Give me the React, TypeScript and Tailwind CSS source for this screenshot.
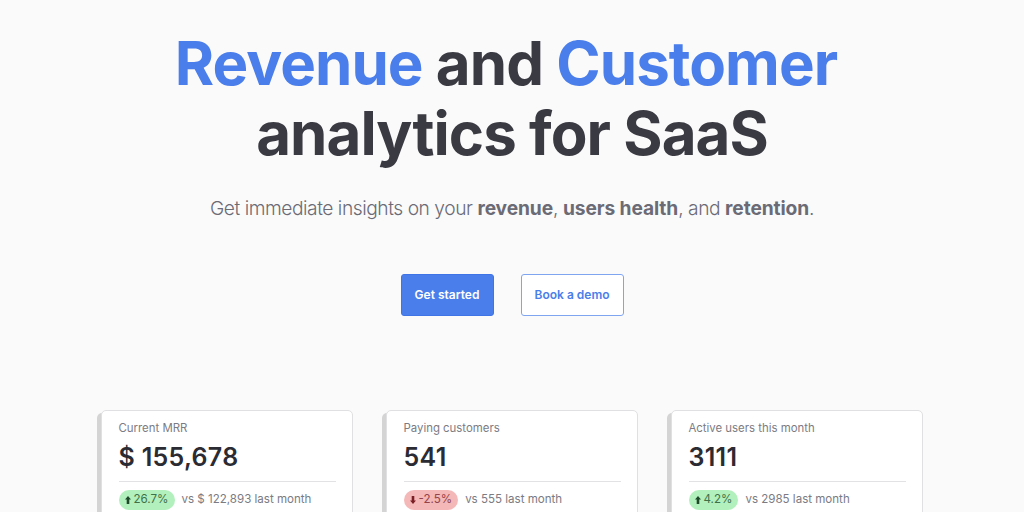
const metrics = [
  { title: "Current MRR", value: "$ 155,678", change: "26.7%", up: true, note: "vs $ 122,893 last month" },
  { title: "Paying customers", value: "541", change: "-2.5%", up: false, note: "vs 555 last month" },
  { title: "Active users this month", value: "3111", change: "4.2%", up: true, note: "vs 2985 last month" },
];

export default function App() {
  return (
    <div className="h-[512px] overflow-hidden bg-[#fafafb] font-['Inter',sans-serif]">
      <div className="flex flex-col items-center pt-[28px]">
        <h1 className="text-center text-[60px] leading-[70px] font-bold tracking-[-0.95px] text-[#3a3a42]">
          <span className="text-[#4a7eea]">Revenue</span> and <span className="mr-[12px] text-[#4a7eea]">Customer</span>
          <br />
          analytics for SaaS
        </h1>
        <p className="mt-[25px] text-[19.2px] leading-[30px] font-[350] tracking-[-0.45px] text-[#6b6b75]">
          Get immediate insights on your <b className="font-bold tracking-[-0.1px]">revenue</b>, <b className="font-bold tracking-[-0.1px]">users health</b>, and <b className="font-bold tracking-[-0.1px]">retention</b>.
        </p>
        <div className="mt-[51px] flex gap-[27px]">
          <button className="h-[42px] w-[93px] rounded-[3px] border border-[#3f74e6] bg-[#4a7eea] text-[12px] font-semibold text-white">
            Get started
          </button>
          <button className="h-[42px] w-[103px] rounded-[3px] border border-[#7fa5f0] bg-white text-[12px] font-semibold text-[#4a7eea]">
            Book a demo
          </button>
        </div>
      </div>
      <div className="mt-[94px] ml-[101px] flex gap-[33px]">
        {metrics.map((m) => (
          <div
            key={m.title}
            className="h-[140px] w-[252px] rounded-[5px] border border-[#e0e0e2] bg-white px-[16.5px] pt-[9px] shadow-[-4px_3px_0_0_#d4d4d4]"
          >
            <div className="text-[11.4px] leading-[16px] text-[#7b7b83]">{m.title}</div>
            <div className="mt-[5px] text-[25px] leading-[32px] font-semibold tracking-[0.3px] text-[#2b2b33]">{m.value}</div>
            <div className="mt-[8px] border-t border-[#e2e2e4] pt-[8px]">
              <div className="flex items-center gap-[7px]">
                <span
                  className={
                    m.up
                      ? "flex h-[20px] items-center gap-[3px] rounded-full bg-[#b2f0bd] pr-[6px] pl-[6px] text-[11.6px] text-[#3f7049]"
                      : "flex h-[20px] items-center gap-[3px] rounded-full bg-[#f5b8b8] pr-[6px] pl-[6px] text-[11.6px] text-[#94434a]"
                  }
                >
                  <svg viewBox="0 0 6 8" className={m.up ? "h-[8px] w-[6px] fill-[#1f4a2a]" : "h-[8px] w-[6px] rotate-180 fill-[#7a1f24]"}>
                    <path d="M3 0 L6 3.6 H4.3 V8 H1.7 V3.6 H0 Z" />
                  </svg>
                  {m.change}
                </span>
                <span className="text-[11.55px] text-[#7b7b83]">{m.note}</span>
              </div>
            </div>
          </div>
        ))}
      </div>
    </div>
  );
}
